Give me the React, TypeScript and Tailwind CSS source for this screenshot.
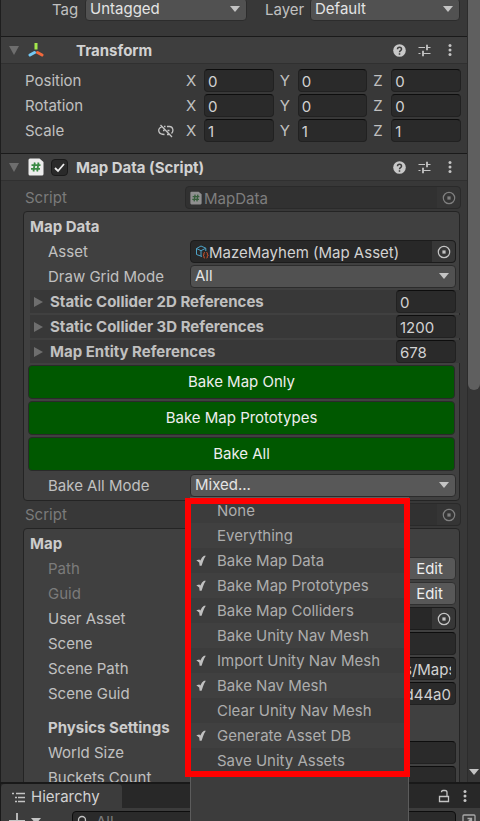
import { ReactNode } from "react";

const font = "font-['Inter','Noto_Sans',sans-serif]";

function Down({ className = "" }: { className?: string }) {
  return (
    <svg viewBox="0 0 10 6" className={`h-1.5 w-2.5 fill-[#c4c4c4] ${className}`} aria-hidden="true">
      <path d="M0 0h10L5 6z" />
    </svg>
  );
}

function Select({ id, label, value, tone = "bg-[#515151]" }: { id: string; label?: string; value: string; tone?: string }) {
  return (
    <span className="relative block min-w-0 flex-1">
      <select
        id={id}
        aria-label={label}
        defaultValue={value}
        className={`block h-[23px] w-full appearance-none rounded border border-[#2c2c2c] pb-0.5 pl-1 leading-5 text-[#e4e4e4] ${tone}`}
      >
        <option>{value}</option>
      </select>
      <Down className="pointer-events-none absolute top-2 right-[7px]" />
    </span>
  );
}

function TextBox({ id, label, value = "", className = "" }: { id?: string; label?: string; value?: string; className?: string }) {
  return (
    <input
      id={id}
      aria-label={label}
      defaultValue={value}
      className={`block h-[23px] w-full min-w-0 rounded border border-[#212121] border-t-[#0d0d0d] bg-[#2a2a2a] pt-0.5 pr-1 text-[#d2d2d2] ${className || "pl-[3px]"}`}
    />
  );
}

function Picker({ dim = false }: { dim?: boolean }) {
  return (
    <button
      aria-label="Select object"
      className={`flex h-full w-[23px] shrink-0 items-center justify-center rounded-r ${dim ? "bg-[#353535] text-[#808080]" : "bg-[#373737] text-[#c4c4c4]"}`}
    >
      <svg viewBox="0 0 14 14" className="size-3.5" aria-hidden="true">
        <circle cx="7" cy="7" r="5.7" fill="none" stroke="currentColor" strokeWidth="1.2" />
        <path d="M5.4 5.4h3.2v3.2H5.4z" fill="currentColor" />
      </svg>
    </button>
  );
}

function ObjectField({ icon, value = "", label, dim = false }: { icon?: ReactNode; value?: string; label: string; dim?: boolean }) {
  return (
    <div
      className={`flex h-[23px] min-w-0 flex-1 items-center rounded border ${dim ? "border-[#2a2a2a] bg-[#313131] text-[#7e7e7e]" : "border-[#1c1c1c] bg-[#282828] text-[#d2d2d2]"}`}
    >
      {icon}
      <input aria-label={label} readOnly defaultValue={value} className="h-full min-w-0 flex-1 bg-transparent pt-0.5" />
      <Picker dim={dim} />
    </div>
  );
}

function ScriptIcon({ className }: { className: string }) {
  return (
    <svg viewBox="0 0 16 18" className={className} aria-hidden="true">
      <path d="M2 .5h9.500L15.500 4v12a1.500 1.500 0 0 1-1.500 1.500H2A1.500 1.500 0 0 1 .5 16V2A1.500 1.500 0 0 1 2 .5z" fill="#ececec" />
      <path d="M6.800 4.500 5.500 13.500M10.500 4.500 9.200 13.500M3.500 7.200h9M3 10.800h9" stroke="#3b8a45" strokeWidth="1.800" fill="none" />
    </svg>
  );
}

function AxesIcon() {
  return (
    <svg viewBox="0 0 16 16" className="size-4" aria-hidden="true" fill="none" strokeWidth="3">
      <path d="M8 1v6.500" stroke="#a4e84c" />
      <path d="M6.500 10.500 2 13" stroke="#74c8f4" strokeLinecap="round" />
      <path d="M9.500 10.500 14 13" stroke="#f2683c" strokeLinecap="round" />
    </svg>
  );
}

function AssetIcon() {
  return (
    <svg viewBox="0 0 14 14" className="ml-1 size-3.5 shrink-0" aria-hidden="true" fill="none">
      <path d="M7 11.500 1.500 9.500v-6L6 1l4.800 2.200V6M1.500 3.500 6 5.700l4.800-2.500M6 5.700v5.500" stroke="#4da3c7" />
      <path d="M9.800 7.500c-1.300 0-.7 1.300-.9 2-.1.500-.4.700-.9.800.5.100.8.400.9.900.2.700-.4 1.800.9 1.800M11.500 7.500c1.300 0 .7 1.300.9 2 .1.500.4.700.9.800-.5.100-.8.400-.9.900-.2.700.4 1.800-.9 1.800" stroke="#e0582e" />
    </svg>
  );
}

function Kebab() {
  return (
    <svg viewBox="0 0 4 14" className="h-3.5 w-1 fill-[#c4c4c4]" aria-hidden="true">
      <circle cx="2" cy="2.500" r="1.500" />
      <circle cx="2" cy="7" r="1.500" />
      <circle cx="2" cy="11.500" r="1.500" />
    </svg>
  );
}

function ComponentHeader({ icon, toggle, title }: { icon: ReactNode; toggle?: boolean; title: string }) {
  return (
    <header className="flex h-7 items-center border-t border-b border-t-[#1a1a1a] border-b-[#303030] bg-[#3e3e3e] pr-[15px] pl-2">
      <svg viewBox="0 0 10 9" className="h-[9px] w-2.5 fill-[#6e6e6e]" aria-hidden="true">
        <path d="M0 0h10L5 9z" />
      </svg>
      <span className="ml-2 flex w-[18px] justify-center">{icon}</span>
      <span className="flex w-[31px] shrink-0 pl-[6px]">
        {toggle && (
          <span className="relative block size-[17px]">
            <input
              type="checkbox"
              defaultChecked
              aria-label="Enable Map Data"
              className="block size-[17px] appearance-none rounded-sm border border-[#1a1a1a] bg-[#2a2a2a]"
            />
            <svg viewBox="0 0 17 17" className="pointer-events-none absolute inset-0" aria-hidden="true">
              <path d="M4 9l3 3 6-7" fill="none" stroke="#ececec" strokeWidth="1.800" />
            </svg>
          </span>
        )}
      </span>
      <h2 className="flex-1 pt-0.5 font-bold text-[#d2d2d2]">{title}</h2>
      <span className="flex items-center">
        <button aria-label="Help">
          <svg viewBox="0 0 13 13" className="size-[13px]" aria-hidden="true">
            <circle cx="6.500" cy="6.500" r="6.300" fill="#c8c8c8" />
            <path d="M4.500 5.200c0-2.700 4-2.700 4 0 0 1.400-2 1.400-2 3M6.500 9.200v1.500" fill="none" stroke="#3e3e3e" strokeWidth="1.500" />
          </svg>
        </button>
        <button aria-label="Presets" className="ml-3">
          <svg viewBox="0 0 13 13" className="size-[13px]" aria-hidden="true" fill="none" stroke="#c4c4c4">
            <path d="M.5 3.500H7M8.500 3.500h4M.5 9.500h2M5 9.500h7.500" strokeWidth="1.200" />
            <path d="M9 .8v5.400M5 6.800v5.400" strokeWidth="1.800" />
          </svg>
        </button>
        <button aria-label="More" className="ml-[17px]">
          <Kebab />
        </button>
      </span>
    </header>
  );
}

function Row({ id, label, dim = false, children }: { id?: string; label: string; dim?: boolean; children?: ReactNode }) {
  return (
    <div className="flex h-[23px] items-center pl-5">
      <label htmlFor={id} className={`w-[142px] shrink-0 whitespace-nowrap ${dim ? "text-[#7b7b7b]" : ""}`}>
        {label}
      </label>
      {children}
    </div>
  );
}

function ScriptRow({ value, icon }: { value?: string; icon?: ReactNode }) {
  return (
    <div className="flex items-center pl-6">
      <span className="w-[160px] shrink-0 text-[#7b7b7b]">Script</span>
      <ObjectField dim label="Script" value={value} icon={icon} />
    </div>
  );
}

function Group({ title, children }: { title: string; children: ReactNode }) {
  return (
    <section className="mr-px ml-[22px] flex flex-col gap-0.5 rounded border border-[#242424] bg-[#404040] py-[3px] pr-[3px] pl-1">
      <h3 className="h-[23px] pl-0.5 leading-6 font-bold text-[#cccccc]">{title}</h3>
      {children}
    </section>
  );
}

const axes = ["X", "Y", "Z"];
const transform = [
  { label: "Position", value: "0" },
  { label: "Rotation", value: "0" },
  { label: "Scale", value: "1" },
];

const references = [
  { label: "Static Collider 2D References", value: "0" },
  { label: "Static Collider 3D References", value: "1200" },
  { label: "Map Entity References", value: "678" },
];

const bakeModes = [
  { label: "None", on: false },
  { label: "Everything", on: false },
  { label: "Bake Map Data", on: true },
  { label: "Bake Map Prototypes", on: true },
  { label: "Bake Map Colliders", on: true },
  { label: "Bake Unity Nav Mesh", on: false },
  { label: "Import Unity Nav Mesh", on: true },
  { label: "Bake Nav Mesh", on: true },
  { label: "Clear Unity Nav Mesh", on: false },
  { label: "Generate Asset DB", on: true },
  { label: "Save Unity Assets", on: false },
];

function BakeMenu() {
  return (
    <div className="absolute top-full left-0 z-20 h-[400px] w-[219px] border border-[#5c5c5c] bg-[#3c3c3c]">
      <div role="menu" className="flex flex-col">
        {bakeModes.map((m) => (
          <button
            key={m.label}
            role="menuitemcheckbox"
            aria-checked={m.on}
            className="flex h-[25px] items-center pl-[5px] text-left text-[#adadad] even:bg-[#404040]"
          >
            <span className="w-[21px]">
              {m.on && (
                <svg viewBox="0 0 10 12" className="h-3 w-2.5" aria-hidden="true">
                  <path d="M.3 5.200 3.300 4.500 4.300 5.500 6 2.500 8 .8H9.800L8.200 3.500 7 6.500 5.600 10.800H3.600L3.200 7.500z" fill="#c0c0c0" />
                </svg>
              )}
            </span>
            {m.label}
          </button>
        ))}
      </div>
      <div className="pointer-events-none absolute top-0 -left-1.5 h-[279px] w-[225px] border-6 border-[#ff0000]" />
    </div>
  );
}

function Inspector() {
  return (
    <main className="min-w-0 flex-1 border-l border-[#1e1e1e]">
      <div className="flex h-9 items-start pr-[7px] pl-[51px]">
        <label htmlFor="tag" className="w-[33px] leading-5">Tag</label>
        <span className="-mt-0.5 flex w-[162px]">
          <Select id="tag" value="Untagged" />
        </span>
        <label htmlFor="layer" className="ml-[18px] w-[45px] leading-5">Layer</label>
        <span className="-mt-0.5 flex flex-1">
          <Select id="layer" value="Default" />
        </span>
      </div>

      <ComponentHeader icon={<AxesIcon />} title="Transform" />
      <div className="flex flex-col gap-0.5 pt-[5px] pr-1.5 pb-[11px] pl-6">
        {transform.map((t) => (
          <div key={t.label} className="flex items-center">
            <span className="flex w-[155px] shrink-0 items-center justify-between pr-1.5">
              {t.label}
              {t.label === "Scale" && (
                <svg viewBox="0 0 16 14" className="h-3.5 w-4" aria-hidden="true" fill="none" stroke="#c4c4c4" strokeWidth="1.300">
                  <path d="M3.500 3.200C1 3.500.3 6 1 7.800 1.700 10 3.500 10.500 6.500 10.500M6 2.500h1.500M9 2.500h2.500c3.500 0 4.500 4.500 2 7M9 10.500h2M5 6.500h1.500M9.500 6.500h2M2.500 1l11.500 12" />
                </svg>
              )}
            </span>
            {axes.map((a) => (
              <label key={a} className="flex flex-1 items-center">
                <span className="w-6 shrink-0 pl-1.5">{a}</span>
                <TextBox label={`${t.label} ${a}`} value={t.value} />
              </label>
            ))}
          </div>
        ))}
      </div>

      <ComponentHeader icon={<ScriptIcon className="h-[18px] w-4" />} toggle title="Map Data (Script)" />
      <div className="flex flex-col gap-0.5 pt-[5px] pr-1.5">
        <ScriptRow value="MapData" icon={<ScriptIcon className="mr-0.5 ml-1 h-3.5 w-3 shrink-0 opacity-50" />} />

        <Group title="Map Data">
          <Row label="Asset">
            <ObjectField label="Asset" value="MazeMayhem (Map Asset)" icon={<AssetIcon />} />
          </Row>
          <Row id="grid" label="Draw Grid Mode">
            <Select id="grid" value="All" />
          </Row>
          {references.map((r) => (
            <div key={r.label} className="-mr-1 ml-0.5 flex h-[23px] items-center bg-[#383838] pr-1 pl-1">
              <svg viewBox="0 0 9 10" className="h-2.5 w-[9px] fill-[#6e6e6e]" aria-hidden="true">
                <path d="M0 0v10l9-5z" />
              </svg>
              <span className="ml-[7px] flex-1 font-bold text-[#c0c0c0]">{r.label}</span>
              <span className="w-[60px]">
                <TextBox label={r.label} value={r.value} />
              </span>
            </div>
          ))}
          <div className="flex flex-col gap-0.5 pb-px">
            {["Bake Map Only", "Bake Map Prototypes", "Bake All"].map((b) => (
              <button key={b} className="mr-px h-[34px] rounded border border-[#2a2a2a] bg-[#005800] text-[#eeeeee]">
                {b}
              </button>
            ))}
          </div>
          <Row id="bake" label="Bake All Mode">
            <span className="relative flex flex-1">
              <Select id="bake" value="Mixed..." tone="bg-[#585858]" />
              <BakeMenu />
            </span>
          </Row>
        </Group>

        <ScriptRow />

        <Group title="Map">
          {["Path", "Guid"].map((l) => (
            <Row key={l} label={l} dim>
              <button className="ml-auto h-[23px] w-[53px] rounded border border-[#303030] bg-[#585858] leading-5 text-[#eeeeee]">Edit</button>
            </Row>
          ))}
          <Row label="User Asset">
            <ObjectField label="User Asset" />
          </Row>
          <Row id="scene" label="Scene">
            <TextBox id="scene" />
          </Row>
          <Row id="path" label="Scene Path">
            <TextBox id="path" value="s/Maps" className="pl-[213px]" />
          </Row>
          <Row id="guid" label="Scene Guid">
            <TextBox id="guid" value="d44a0" className="text-right" />
          </Row>
          <h4 className="mt-[9px] h-[23px] pl-5 leading-6 font-bold text-[#cccccc]">Physics Settings</h4>
          <Row id="world" label="World Size">
            <TextBox id="world" />
          </Row>
          <Row id="buckets" label="Buckets Count">
            <TextBox id="buckets" />
          </Row>
        </Group>
      </div>
    </main>
  );
}

function Hierarchy() {
  return (
    <section className="relative z-10 h-[39px] shrink-0 border-t-2 border-l border-[#191919] bg-[#282828]">
      <div className="flex h-6 items-center pr-[13px]">
        <button className="flex h-full w-[121px] items-center rounded-t bg-[#3c3c3c] pt-0.5 pl-[11px] text-[#d2d2d2]">
          <svg viewBox="0 0 13 11" className="mr-1.5 h-[11px] w-[13px]" aria-hidden="true" fill="none" stroke="#c4c4c4" strokeWidth="1.300">
            <path d="M0 1.500h2M4 1.500h9M3 5.500h2M6 5.500h7M3 9.500h2M6 9.500h7" />
          </svg>
          Hierarchy
        </button>
        <button aria-label="Lock" className="ml-auto">
          <svg viewBox="0 0 12 14" className="h-3.5 w-3" aria-hidden="true" fill="none" stroke="#c4c4c4" strokeWidth="1.300">
            <path d="M1.500 7.500h9v5h-9zM3.500 3.200c0-1 .5-1.700 1.500-1.700h2c1.200 0 2 .8 2 2v4" />
          </svg>
        </button>
        <button aria-label="Hierarchy menu" className="ml-[13px]">
          <Kebab />
        </button>
      </div>
      <div className="flex h-[26px] items-center bg-[#3c3c3c] pr-1 pl-2">
        <button aria-label="Create" className="flex w-[63px] items-center">
          <svg viewBox="0 0 16 16" className="size-4" aria-hidden="true">
            <path d="M8 0v16M0 8h16" stroke="#c4c4c4" strokeWidth="1.800" />
          </svg>
          <Down className="ml-1.5" />
        </button>
        <label className="flex h-5 flex-1 items-center rounded border border-[#0d0d0d] bg-[#2a2a2a] pl-1">
          <svg viewBox="0 0 12 12" className="h-3 w-3 shrink-0" aria-hidden="true" fill="none" stroke="#c4c4c4" strokeWidth="1.300">
            <circle cx="5" cy="5" r="3.500" />
            <path d="M7.500 7.500 11 11" />
          </svg>
          <input aria-label="Search" placeholder="All" className="ml-[7px] h-full min-w-0 flex-1 bg-transparent placeholder:text-[#7b7b7b]" />
        </label>
        <button aria-label="Open search window" className="ml-1.5">
          <svg viewBox="0 0 14 14" className="size-3.5" aria-hidden="true" fill="none" stroke="#a8a8a8" strokeWidth="1.300">
            <rect x="1" y="1" width="12" height="12" rx="1" />
            <path d="M5 9l4-4M5.500 4.500h4v4" />
          </svg>
        </button>
      </div>
    </section>
  );
}

export default function App() {
  return (
    <div className={`flex h-screen flex-col overflow-hidden bg-[#383838] text-[15px] leading-5 text-[#c0c0c0] ${font}`}>
      <div className="flex min-h-0 flex-1">
        <Inspector />
        <div className="flex w-[13px] shrink-0 flex-col items-center justify-between border-l border-[#2c2c2c] bg-[#353535]">
          <div className="h-[390px] w-full rounded-b-md bg-[#5f5f5f]" />
          <Down className="mb-[7px]" />
        </div>
      </div>
      <Hierarchy />
    </div>
  );
}
